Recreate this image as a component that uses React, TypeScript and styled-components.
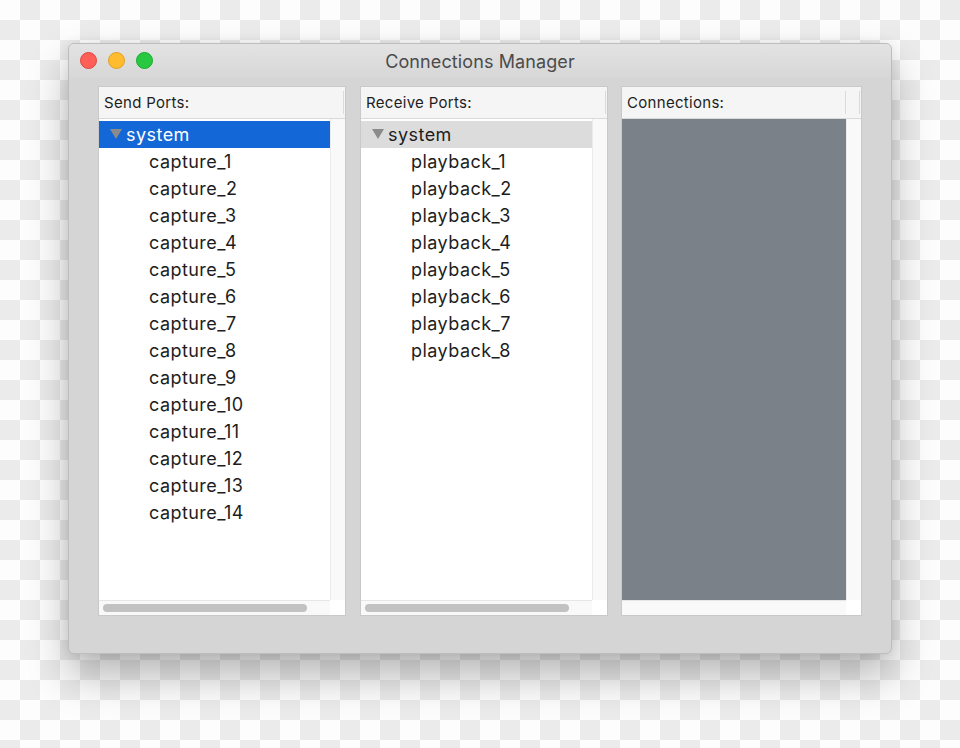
import * as React from 'react';
import styled, { createGlobalStyle } from 'styled-components';

const GlobalStyle = createGlobalStyle`
    html, body {
        margin: 0;
        padding: 0;
    }
    body {
        font-family: Inter, "Liberation Sans", sans-serif;
        background-color: #fdfdfd;
        background-image:
            linear-gradient(45deg, #ebebeb 25%, transparent 25%, transparent 75%, #ebebeb 75%),
            linear-gradient(45deg, #ebebeb 25%, transparent 25%, transparent 75%, #ebebeb 75%);
        background-size: 40px 40px;
        background-position: 0 0, 20px 20px;
    }
`

const Stage = styled.div`
    width: 960px;
    height: 748px;
    box-sizing: border-box;
    padding: 43px 0 0 68px;
    overflow: hidden;
`

const Window = styled.div`
    width: 824px;
    height: 611px;
    box-sizing: border-box;
    border: 1px solid #bdbdbd;
    border-radius: 6px;
    background: #d5d5d5;
    box-shadow: 0 22px 40px rgba(0, 0, 0, 0.28), 0 0 12px rgba(0, 0, 0, 0.08);
    display: flex;
    flex-direction: column;
`

const TitleBar = styled.div`
    height: 34px;
    position: relative;
    display: flex;
    align-items: center;
    justify-content: center;
    background: linear-gradient(#e3e3e3, #d7d7d7);
    border-radius: 5px 5px 0 0;
`

const Lights = styled.div`
    position: absolute;
    left: 11px;
    top: 8px;
    display: flex;
    gap: 11px;
`

const Light = styled.span<{ $color: string; $edge: string }>`
    width: 17px;
    height: 17px;
    border-radius: 50%;
    box-sizing: border-box;
    background: ${p => p.$color};
    border: 1px solid ${p => p.$edge};
`

const Title = styled.div`
    font-size: 18px;
    color: #4b4b4b;
    letter-spacing: 0.1px;
`

const Body = styled.div`
    flex: 1;
    display: flex;
    padding: 8px 29px 37px 29px;
    gap: 14px;
`

const Panel = styled.div<{ $width: number; $pull?: number }>`
    width: ${p => p.$width}px;
    margin-left: ${p => -(p.$pull ?? 0)}px;
    flex: none;
    box-sizing: border-box;
    border: 1px solid #c9c9c9;
    background: #fafafa;
    display: grid;
    grid-template-columns: 1fr 15px;
    grid-template-rows: 32px 1fr 15px;
`

const Header = styled.div`
    grid-column: 1 / 3;
    position: relative;
    background: #f5f5f5;
    border-bottom: 1px solid #d9d9d9;
    display: flex;
    align-items: center;
    padding-left: 5px;
    font-size: 15px;
    letter-spacing: 0.3px;
    color: #1e1e1e;
`

const HeaderRule = styled.span<{ $right: number }>`
    position: absolute;
    right: ${p => p.$right}px;
    top: 4px;
    bottom: 4px;
    width: 1px;
    background: #dadada;
`

const Tree = styled.div`
    background: #ffffff;
    padding-top: 2px;
    overflow: hidden;
`

const Empty = styled.div`
    background: #7b8188;
`

const VTrack = styled.div`
    background: #f9f9f9;
    border-left: 1px solid #ececec;
`

const HTrack = styled.div`
    background: #f9f9f9;
    border-top: 1px solid #e6e6e6;
    display: flex;
    align-items: center;
    padding: 0 4px;
`

const Thumb = styled.div<{ $width: number }>`
    width: ${p => p.$width}px;
    height: 8px;
    border-radius: 4px;
    background: #c2c2c2;
`

const Corner = styled.div`
    background: #ffffff;
`

const Row = styled.div<{ $state?: 'selected' | 'muted' }>`
    height: 27px;
    display: flex;
    align-items: center;
    font-size: 18px;
    letter-spacing: 0.45px;
    white-space: nowrap;
    color: ${p => (p.$state === 'selected' ? '#ffffff' : '#1d1d1d')};
    background: ${p => (p.$state === 'selected' ? '#1467d6' : p.$state === 'muted' ? '#dcdcdc' : 'transparent')};
`

const Disclosure = styled.span`
    width: 0;
    height: 0;
    margin: 0 4px 2px 11px;
    border-left: 6px solid transparent;
    border-right: 6px solid transparent;
    border-top: 10px solid #8b8b8b;
`

const Leaf = styled.span`
    padding-left: 50px;
`

type PortTreeProps = { group: string; ports: string[]; selected?: boolean };

const PortTree: React.FC<PortTreeProps> = ({ group, ports, selected }) => (
    <Tree>
        <Row $state={selected ? 'selected' : 'muted'}>
            <Disclosure />
            {group}
        </Row>
        {ports.map(port => (
            <Row key={port}>
                <Leaf>{port}</Leaf>
            </Row>
        ))}
    </Tree>
);

const range = (prefix: string, n: number) => Array.from({ length: n }, (_, i) => `${prefix}_${i + 1}`);

const App: React.FC = () => {
    const captures = React.useMemo(() => range('capture', 14), []);
    const playbacks = React.useMemo(() => range('playback', 8), []);
    return (
        <Stage>
            <GlobalStyle />
            <Window>
                <TitleBar>
                    <Lights>
                        <Light $color="#fe5f57" $edge="#e0443e" />
                        <Light $color="#febc2e" $edge="#dea123" />
                        <Light $color="#28c840" $edge="#1aab29" />
                    </Lights>
                    <Title>Connections Manager</Title>
                </TitleBar>
                <Body>
                    <Panel $width={248}>
                        <Header>
                            Send Ports:
                            <HeaderRule $right={1} />
                        </Header>
                        <PortTree group="system" ports={captures} selected />
                        <VTrack />
                        <HTrack><Thumb $width={204} /></HTrack>
                        <Corner />
                    </Panel>
                    <Panel $width={248}>
                        <Header>
                            Receive Ports:
                            <HeaderRule $right={1} />
                        </Header>
                        <PortTree group="system" ports={playbacks} />
                        <VTrack />
                        <HTrack><Thumb $width={204} /></HTrack>
                        <Corner />
                    </Panel>
                    <Panel $width={241} $pull={1}>
                        <Header>
                            Connections:
                            <HeaderRule $right={15} />
                            <HeaderRule $right={1} />
                        </Header>
                        <Empty />
                        <VTrack />
                        <HTrack />
                        <Corner />
                    </Panel>
                </Body>
            </Window>
        </Stage>
    );
};

export default App;
